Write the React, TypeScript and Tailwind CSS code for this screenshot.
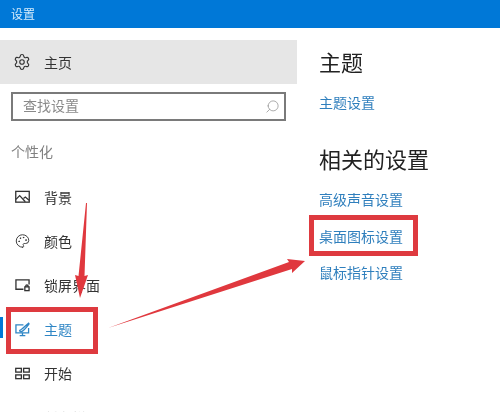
import { Palette, Search, Settings } from "lucide-react";
import type { ReactNode } from "react";

const font = "font-['Noto_Sans_CJK_SC','Noto_Sans',sans-serif]";

function PictureIcon() {
  return (
    <svg width="16" height="14" viewBox="0 0 16 14" fill="none" stroke="currentColor" strokeWidth="1.4">
      <rect x="0.8" y="1" width="14.4" height="11.5" />
      <path d="M1 9.5 5 5.5 11 12" />
      <path d="M9 8.5 11 7 15 10.5" />
    </svg>
  );
}

function LockScreenIcon() {
  return (
    <svg width="16" height="14" viewBox="0 0 16 14" fill="none" stroke="currentColor" strokeWidth="1.4">
      <path d="M9 11.5H1V1.5H15V6.5" />
      <rect x="10.5" y="9" width="4.5" height="4" />
      <path d="M11.5 9V8a1.2 1.2 0 0 1 2.4 0v1" />
    </svg>
  );
}

function ThemeIcon() {
  return (
    <svg width="16" height="15" viewBox="0 0 16 15" fill="none" stroke="currentColor" strokeWidth="1.4">
      <path d="M9 2.5H1V11H14.5V6" />
      <path d="M5 14H11M8 11V14" />
      <path d="M5 8.5C7 8 11 3.5 14.5 0.8L15 1.5C12.5 5 9 9 6.5 10 5.5 10 5 9.5 5 8.5Z" />
    </svg>
  );
}

function StartIcon() {
  return (
    <svg width="16" height="13" viewBox="0 0 16 13" fill="none" stroke="currentColor" strokeWidth="1.4">
      <rect x="0.8" y="1" width="6" height="4" />
      <rect x="9.2" y="1" width="6" height="4" />
      <rect x="0.8" y="8" width="6" height="4" />
      <rect x="9.2" y="8" width="6" height="4" />
    </svg>
  );
}

function NavItem({ icon, label, active }: { icon: ReactNode; label: string; active?: boolean }) {
  return (
    <div className={`relative flex h-[44px] items-center gap-[14px] pl-[15px] text-[14px] ${active ? "text-[#2f86c5]" : "text-[#333333]"}`}>
      {active && <div className="absolute left-0 top-[10px] h-[21px] w-[3px] bg-[#0078d7]" />}
      <span className="flex w-[15px] justify-center">{icon}</span>
      <span>{label}</span>
    </div>
  );
}

function SettingLink({ label, className }: { label: string; className?: string }) {
  return <div className={`text-[14px] leading-[20px] text-[#2f7fbd] ${className ?? ""}`}>{label}</div>;
}

export default function App() {
  return (
    <div className={`relative h-[412px] w-[500px] overflow-hidden bg-white blur-[0.5px] ${font}`}>
      {/* Title bar */}
      <div className="flex h-[28px] items-center bg-[#0078d7] pl-[11px] text-[12px] text-[#d5ecfb]">设置</div>

      <div className="flex">
        {/* Left nav */}
        <div className="w-[297px]">
          <div className="mt-[12px] flex h-[44px] items-center gap-[13px] bg-[#e6e6e6] pl-[13px] text-[14px] text-[#333333]">
            <Settings size={18} strokeWidth={1.5} />
            <span>主页</span>
          </div>
          <div className="ml-[11px] mt-[8px] flex h-[29px] w-[275px] items-center justify-between border-2 border-[#7a7a7a] pl-[10px] pr-[4px] text-[14px] text-[#8a8a8a]">
            <span className="pb-[3px]">查找设置</span>
            <Search size={15} strokeWidth={1.3} className="-scale-x-100 text-[#999999]" />
          </div>
          <div className="ml-[11px] mt-[19px] text-[14px] leading-[22px] text-[#808080]">个性化</div>
          <div className="mt-[13px]">
            <NavItem icon={<PictureIcon />} label="背景" />
            <NavItem icon={<Palette size={18} strokeWidth={1.5} />} label="颜色" />
            <NavItem icon={<LockScreenIcon />} label="锁屏界面" />
            <NavItem icon={<ThemeIcon />} label="主题" active />
            <NavItem icon={<StartIcon />} label="开始" />
            <div className="pl-[44px] pt-[12px] text-[14px] text-[#dddddd]">任务栏</div>
          </div>
        </div>

        {/* Right content */}
        <div className="pl-[22px]">
          <h1 className="mt-[17px] text-[22px] leading-[32px] text-[#222222]">主题</h1>
          <SettingLink label="主题设置" className="mt-[15px]" />
          <h2 className="mt-[30px] text-[22px] leading-[32px] text-[#222222]">相关的设置</h2>
          <SettingLink label="高级声音设置" className="mt-[15px]" />
          <SettingLink label="桌面图标设置" className="mt-[17px]" />
          <SettingLink label="鼠标指针设置" className="mt-[16px]" />
        </div>
      </div>

      {/* Red annotations */}
      <div className="absolute left-[6px] top-[307px] h-[47px] w-[92px] border-[5px] border-[#de3a3f]" />
      <div className="absolute left-[309px] top-[215px] h-[41px] w-[109px] border-[5px] border-[#de3a3f]" />
      <svg className="absolute left-0 top-0" width="500" height="412" viewBox="0 0 500 412">
        <polygon points="86,203 87,203 84.5,276 88,275 80,298 75,275 78.5,276" fill="#e0383e" />
        <polygon points="108,328 289,262 287,259 305,261 292,273 292,269" fill="#e0383e" />
      </svg>
    </div>
  );
}
